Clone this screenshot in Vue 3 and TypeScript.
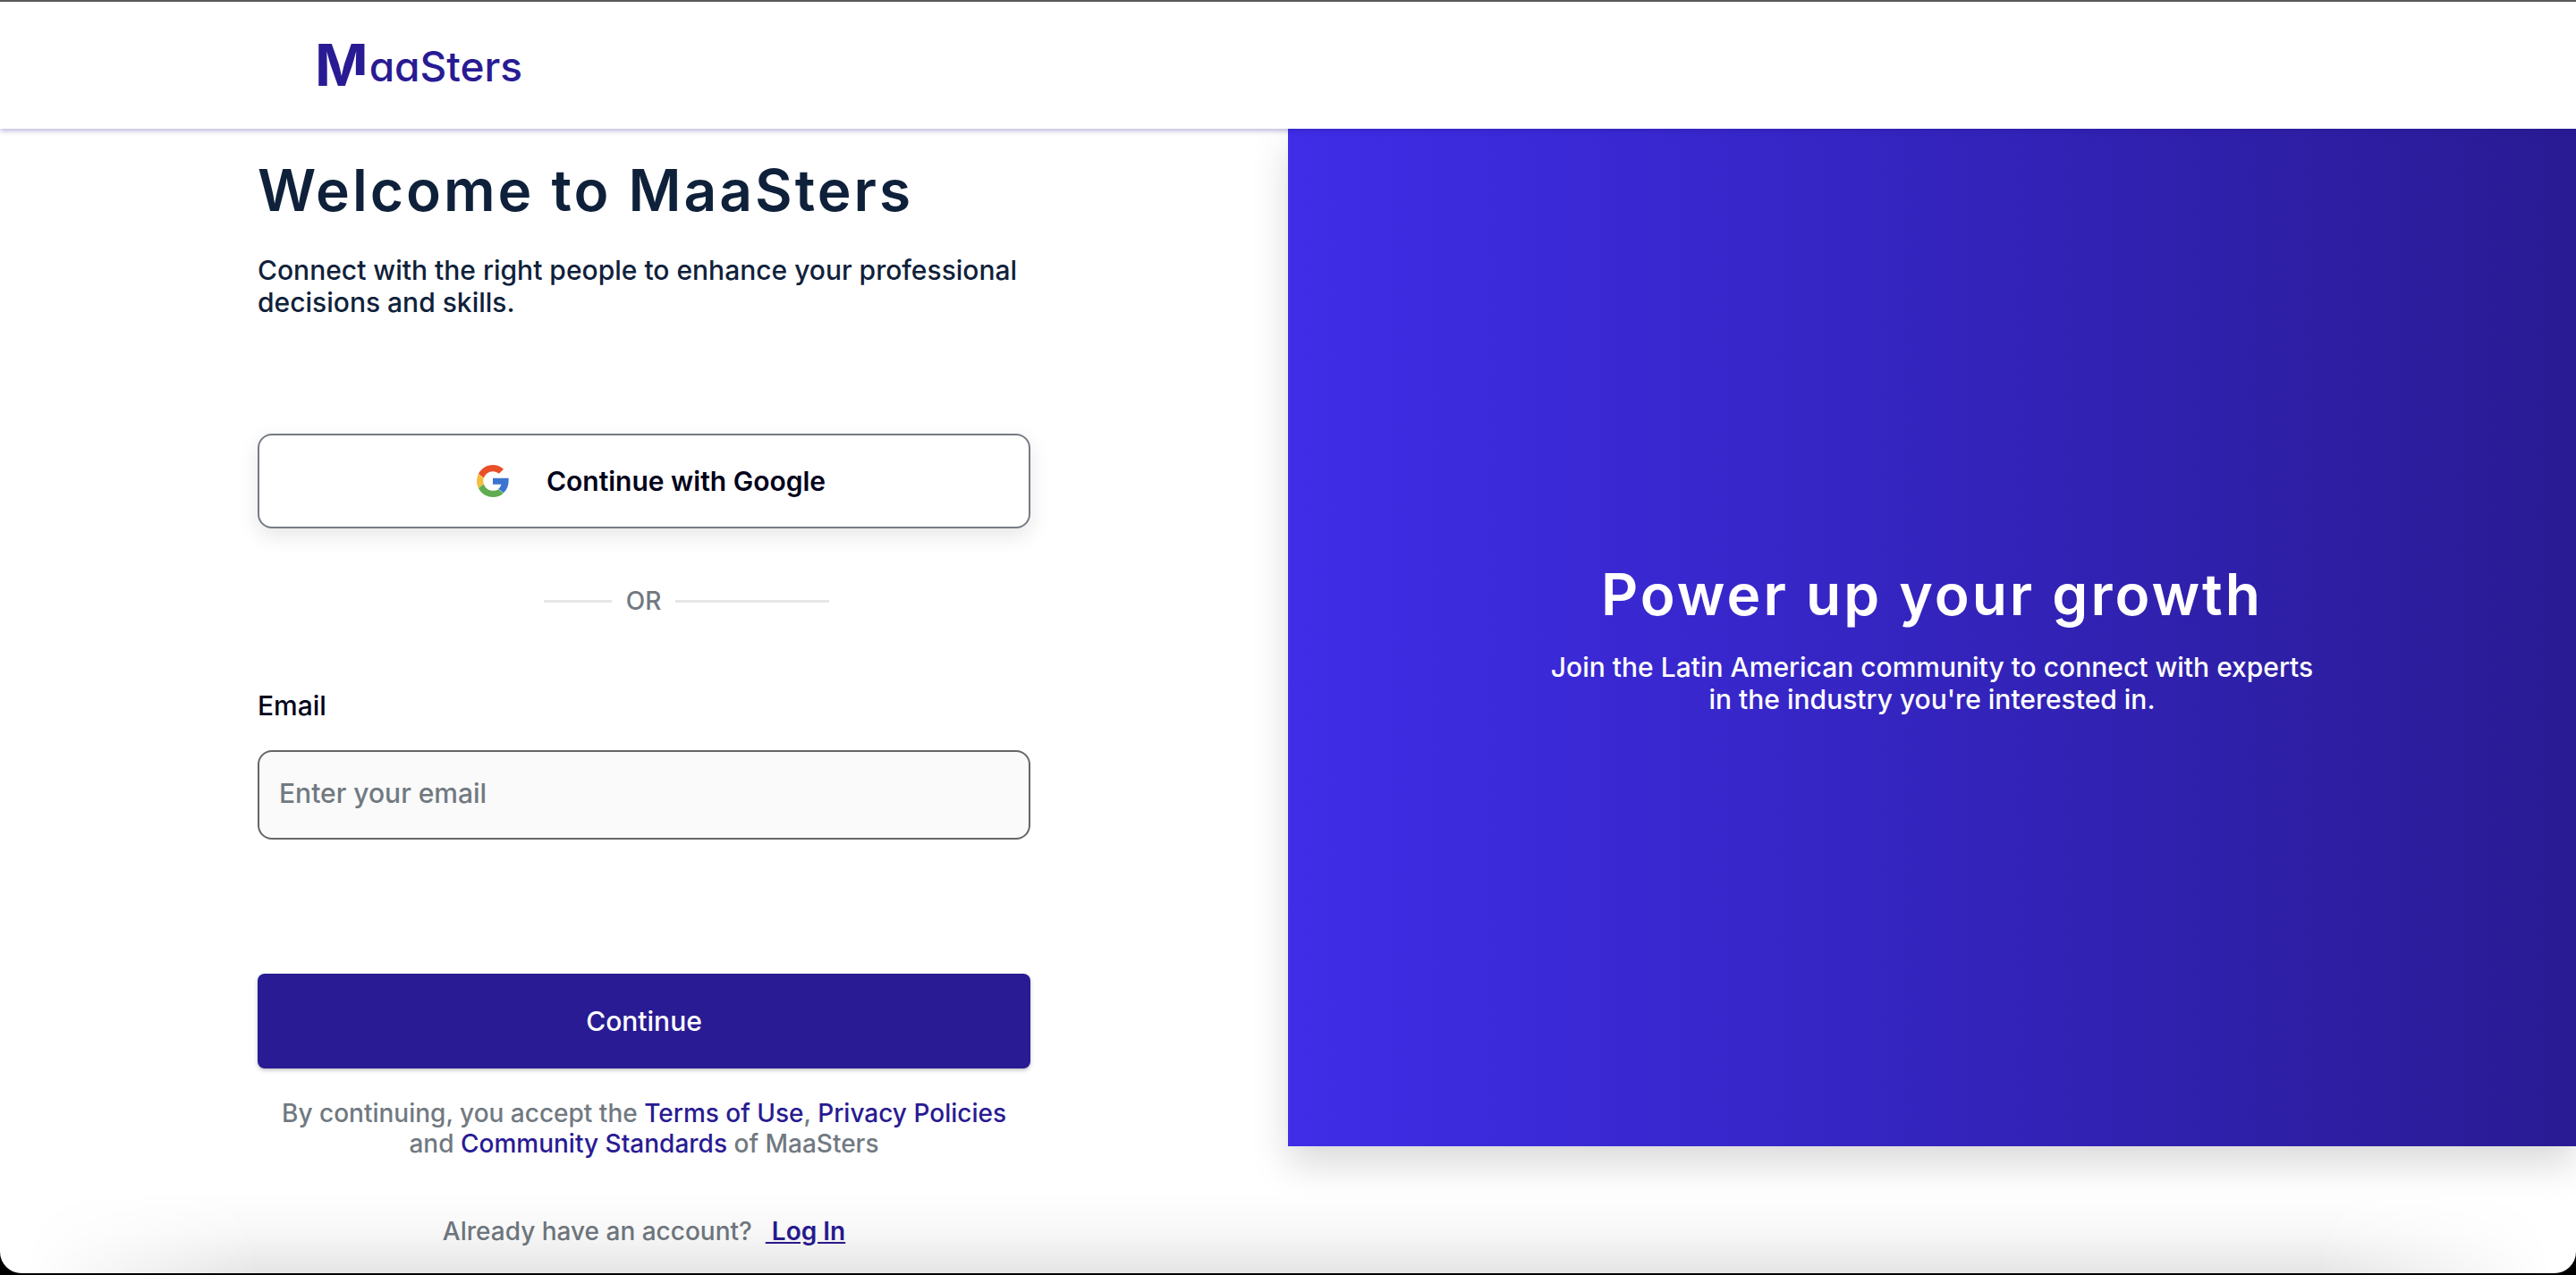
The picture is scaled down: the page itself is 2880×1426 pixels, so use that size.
<script setup lang="ts">
import { ref } from 'vue'

const email = ref('')
</script>

<template>
  <div class="window">
    <header class="header">
      <a class="logo" href="#" aria-label="MaaSters"><span class="logo-m">M</span><span class="logo-rest">aaSters</span></a>
    </header>

    <main class="columns">
      <section class="signup">
        <form class="form" @submit.prevent>
          <h1 class="title">Welcome to MaaSters</h1>
          <p class="lead">Connect with the right people to enhance your professional decisions and skills.</p>

          <button class="google" type="button">
            <svg class="google-icon" viewBox="0 0 48 48" aria-hidden="true">
              <path fill="#e8502a" d="M24 9.5c3.54 0 6.71 1.22 9.21 3.6l6.85-6.85C35.9 2.38 30.47 0 24 0 14.62 0 6.51 5.38 2.56 13.22l7.98 6.19C12.43 13.72 17.74 9.5 24 9.5z" />
              <path fill="#3b74d0" d="M47.5 19.5H24v9.5h12.5c-.58 2.8-2 5-4.34 6.73l7.73 6C45 37 47.5 31 47.5 24z" />
              <path fill="#f2bf42" d="M10.53 28.59c-.48-1.45-.76-2.99-.76-4.59s.27-3.14.76-4.59l-7.98-6.19C.92 16.46 0 20.12 0 24c0 3.88.92 7.54 2.56 10.78l7.97-6.19z" />
              <path fill="#5fad50" d="M24 48c6.48 0 11.93-2.13 15.89-5.81l-7.73-6c-2.15 1.45-4.92 2.3-8.16 2.3-6.26 0-11.57-4.22-13.47-9.91l-7.98 6.19C6.51 42.62 14.62 48 24 48z" />
            </svg>
            <span>Continue with Google</span>
          </button>

          <div class="divider"><span class="rule short"></span><span>OR</span><span class="rule"></span></div>

          <label class="label" for="email">Email</label>
          <input id="email" v-model="email" class="field" type="email" placeholder="Enter your email" />

          <button class="submit" type="submit">Continue</button>

          <p class="terms">
            By continuing, you accept the <a href="#">Terms of Use</a>, <a href="#">Privacy Policies</a>
            and <a href="#">Community Standards</a> of MaaSters
          </p>
          <p class="login">Already have an account?&nbsp; <a href="#">&nbsp;Log In</a></p>
        </form>
      </section>

      <aside class="promo">
        <h2 class="promo-title">Power up your growth</h2>
        <p class="promo-text">Join the Latin American community to connect with experts in the industry you're interested in.</p>
      </aside>
    </main>
    <div class="dock-shade"></div>
  </div>
</template>

<style>
body {
  margin: 0;
  background: #000;
}
</style>

<style scoped>
* {
  box-sizing: border-box;
}
.window {
  position: relative;
  display: flex;
  flex-direction: column;
  min-height: calc(100vh - 2px);
  overflow: hidden;
  border-top: 2px solid #5b5959;
  border-radius: 0 0 24px 24px;
  background: #fff;
  font-family: Inter, "Liberation Sans", sans-serif;
  font-size: 30px;
  line-height: 36px;
  font-weight: 500;
  color: #0f213a;
}
h1,
h2,
p {
  margin: 0;
}
a {
  color: #291b93;
  text-decoration: none;
}
button,
input {
  font: inherit;
}
.header {
  position: relative;
  z-index: 1;
  display: flex;
  align-items: center;
  height: 142px;
  padding-left: 352px;
  background: #fff;
  box-shadow: 0 2px 6px rgba(41, 27, 147, 0.35);
}
.logo {
  display: flex;
  align-items: flex-end;
  gap: 1px;
  color: #291b93;
}
.logo-m {
  font-size: 64px;
  line-height: 64px;
  font-weight: 700;
  clip-path: polygon(0 0, 100% 0, 100% 67%, 74% 67%, 74% 100%, 0 100%);
}
.logo-rest {
  font-size: 46px;
  line-height: 62px;
  font-weight: 500;
  font-feature-settings: "cv11";
}
.columns {
  display: flex;
  align-items: flex-start;
}
.signup {
  width: 50%;
  padding: 30px 10% 28px;
}
.form {
  display: flex;
  flex-direction: column;
}
.title,
.promo-title {
  font-size: 64px;
  line-height: 78px;
  font-weight: 600;
  letter-spacing: 3px;
}
.lead {
  margin-top: 32px;
}
.google {
  display: flex;
  align-items: center;
  justify-content: center;
  gap: 42px;
  height: 106px;
  margin-top: 129px;
  padding: 0 0 0 16px;
  border: 2px solid #757b84;
  border-radius: 16px;
  background: #fff;
  box-shadow: 0 8px 24px rgba(0, 0, 0, 0.1);
  color: #02021a;
  font-weight: 600;
}
.google-icon {
  width: 36px;
  height: 36px;
}
.divider {
  display: flex;
  align-items: center;
  gap: 16px;
  width: 37%;
  margin: 64px 0 0 37%;
  font-size: 28px;
  line-height: 34px;
  color: #717981;
}
.rule {
  flex: 1;
  height: 3px;
  background: #e6e6e6;
}
.rule.short {
  flex: 0 0 76px;
}
.label {
  margin-top: 82px;
  color: #02021a;
}
.field {
  height: 100px;
  margin-top: 32px;
  padding: 0 22px 4px;
  border: 2px solid #666;
  border-radius: 16px;
  background: #fafafa;
  color: #02021a;
}
.field::placeholder {
  color: #717981;
  opacity: 1;
}
.submit {
  height: 106px;
  margin-top: 150px;
  border: 0;
  border-radius: 8px;
  background: #291b93;
  box-shadow: 0 2px 4px rgba(0, 0, 0, 0.25);
  color: #fff;
}
.terms,
.login {
  font-size: 28px;
  line-height: 34px;
  text-align: center;
  color: #717981;
}
.terms {
  margin-top: 33px;
}
.login {
  margin-top: 64px;
}
.login a {
  font-weight: 600;
  text-decoration: underline;
}
.promo {
  display: flex;
  width: 50%;
  flex-direction: column;
  align-items: center;
  justify-content: center;
  min-height: calc(100vh - 288px);
  padding: 0 10%;
  background: linear-gradient(90deg, #3f2de8, #291b93);
  box-shadow: 0 20px 40px rgba(0, 0, 0, 0.15);
  color: #fff;
  text-align: center;
}
.promo-text {
  margin-top: 24px;
}
/* Soft shade that rises from the lower edge of the window */
.dock-shade {
  position: absolute;
  right: 0;
  bottom: 0;
  left: 0;
  height: 90px;
  background: linear-gradient(to top, rgba(0, 0, 0, 0.1), rgba(0, 0, 0, 0.03) 50%, transparent);
  mask-image: linear-gradient(90deg, transparent 1%, #000 10%, #000 90%, transparent 99%);
  pointer-events: none;
}
</style>
